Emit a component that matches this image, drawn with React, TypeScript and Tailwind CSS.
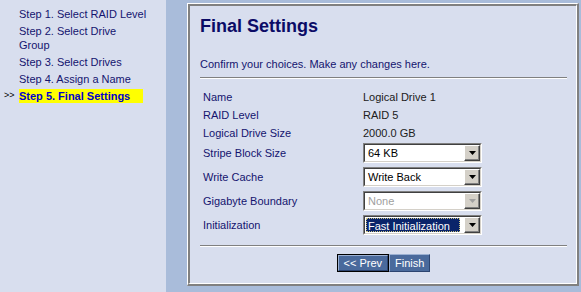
import React from "react";

const steps = [
  "Step 1. Select RAID Level",
  "Step 2. Select Drive Group",
  "Step 3. Select Drives",
  "Step 4. Assign a Name",
  "Step 5. Final Settings",
];

const infoRows = [
  ["Name", "Logical Drive 1"],
  ["RAID Level", "RAID 5"],
  ["Logical Drive Size", "2000.0 GB"],
];

function Arrow({ disabled }: { disabled?: boolean }) {
  return (
    <span className="flex w-[16px] items-center justify-center border border-t-white border-l-white border-r-[#404040] border-b-[#404040] bg-[#d4d0c8] shadow-[inset_-1px_-1px_0_#808080]">
      <svg width="7" height="4" viewBox="0 0 7 4">
        <path d="M0 0h7L3.5 4z" fill={disabled ? "#a0a0a0" : "#000"} />
      </svg>
    </span>
  );
}

function Select({ value, disabled, focused }: { value: string; disabled?: boolean; focused?: boolean }) {
  return (
    <div className="flex h-[20px] w-[119px] border border-t-[#808080] border-l-[#808080] border-r-white border-b-white">
      <div className="flex flex-1 border border-t-[#404040] border-l-[#404040] border-r-[#d4d0c8] border-b-[#d4d0c8] bg-white">
        {focused ? (
          <span className="m-px mr-[4px] flex-1 border border-dotted border-[#c8c080] bg-[#0a246a] pl-[1px] leading-[14px] text-white">
            {value}
          </span>
        ) : (
          <span className={`flex-1 pl-[3px] leading-[16px] ${disabled ? "text-[#a0a0a0]" : "text-black"}`}>
            {value}
          </span>
        )}
        <Arrow disabled={disabled} />
      </div>
    </div>
  );
}

const selectRows: { label: string; value: string; disabled?: boolean; focused?: boolean }[] = [
  { label: "Stripe Block Size", value: "64 KB" },
  { label: "Write Cache", value: "Write Back" },
  { label: "Gigabyte Boundary", value: "None", disabled: true },
  { label: "Initialization", value: "Fast Initialization", focused: true },
];

export default function App() {
  return (
    <div className="flex h-[292px] w-[581px] overflow-hidden font-['Liberation_Sans',Arial,sans-serif] text-[11px]">
      <aside className="w-[166px] shrink-0 bg-[#d8deee] pt-[7px]">
        <ul className="flex flex-col gap-[3px]">
          {steps.map((s, i) => {
            const current = i === steps.length - 1;
            return (
              <li key={s} className="flex">
                <span className="flex w-[19px] items-center pl-[4px] text-[9px] text-black">
                  {current ? ">>" : ""}
                </span>
                <span
                  className={`leading-[14px] ${
                    current ? "w-[124px] bg-[#ffff00] font-bold text-[#0000cc]" : "w-[129px] text-[#14146e]"
                  }`}
                >
                  {s}
                </span>
              </li>
            );
          })}
        </ul>
      </aside>

      <main className="flex-1 bg-[#a9bcda] pt-[3px] pr-[2px] pb-[6px] pl-[21px]">
        <div className="h-full border border-t-white border-l-white border-r-2 border-b-2 border-r-[#808080] border-b-[#808080]">
          <div className="h-full border-2 border-t-[#808080] border-l-[#808080] border-r border-b border-r-white border-b-white bg-[#d8deee] pt-[9px] pr-[9px] pl-[10px]">
            <h1 className="text-[18px] font-bold leading-[22px] text-[#0b0b66]">Final Settings</h1>
            <p className="mt-[20px] leading-[14px] text-[#14146e]">Confirm your choices. Make any changes here.</p>
            <div className="mt-[6px] border-t border-b border-t-[#808080] border-b-white" />

            <div className="mt-[9px] pl-[3px]">
              {infoRows.map(([l, v]) => (
                <div key={l} className="flex h-[18px] items-center">
                  <span className="w-[160px] text-[#14146e]">{l}</span>
                  <span className="text-[#202020]">{v}</span>
                </div>
              ))}
              <div className="mt-[1px] flex flex-col gap-[4px]">
                {selectRows.map((r) => (
                  <div key={r.label} className="flex h-[20px] items-center">
                    <span className="w-[160px] text-[#14146e]">{r.label}</span>
                    <Select value={r.value} disabled={r.disabled} focused={r.focused} />
                  </div>
                ))}
              </div>
            </div>

            <div className="mt-[10px] border-t border-b border-t-[#808080] border-b-white" />

            <div className="mt-[7px] flex justify-center">
              <button className="border border-black">
                <span className="block border border-t-[#9bb0d2] border-l-[#9bb0d2] border-r-[#2c4470] border-b-[#2c4470] bg-[#4a6a9c] px-[5px] leading-[14px] text-white">
                  &lt;&lt; Prev
                </span>
              </button>
              <button className="border border-t-[#9bb0d2] border-l-[#9bb0d2] border-r-[#2c4470] border-b-[#2c4470] bg-[#4a6a9c] px-[5px] leading-[16px] text-white">
                Finish
              </button>
            </div>
          </div>
        </div>
      </main>
    </div>
  );
}
